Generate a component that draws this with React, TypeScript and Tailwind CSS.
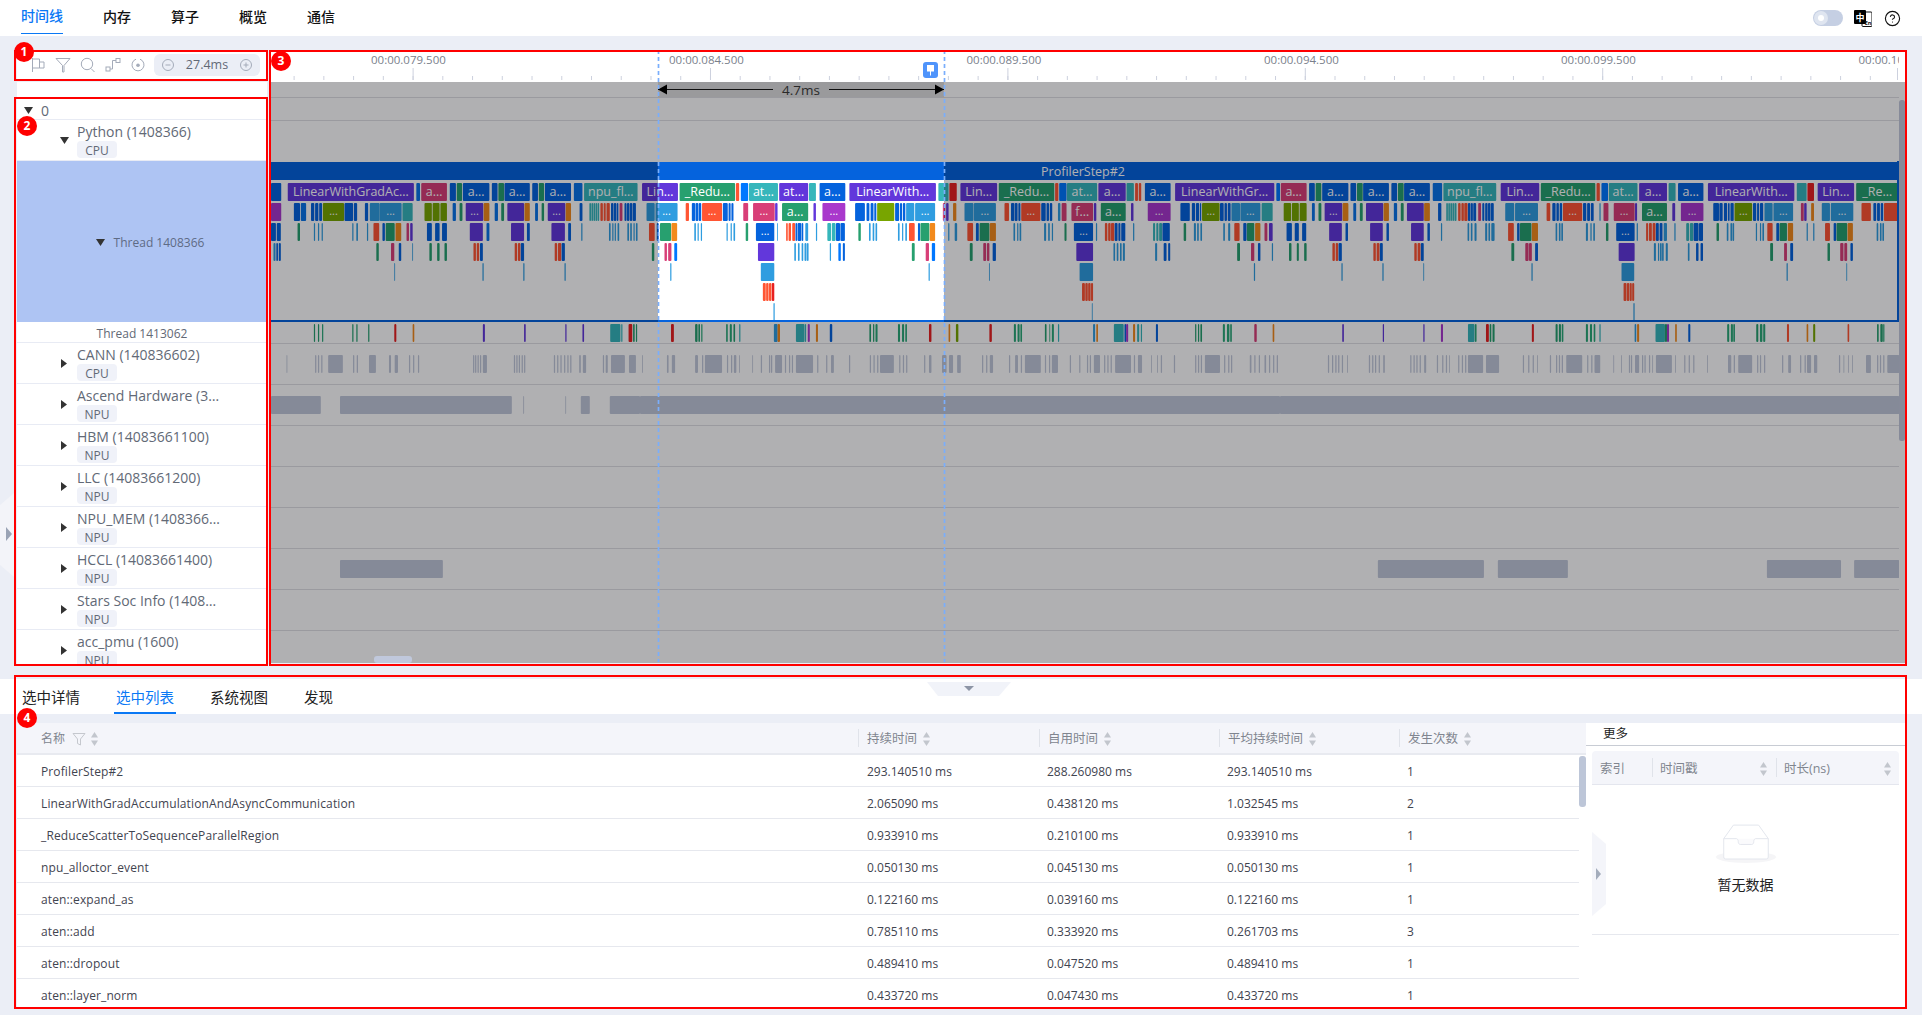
import React from "react";
import { CircleHelp } from "lucide-react";

type Seg = [number, number, string, string?];

const C: Record<string, string> = {
  p: "#6237db", b: "#0563dd", i: "#0a74e8", v: "#0077ff", t: "#36b6bb", k: "#d83f78", g: "#27a06f",
  l: "#2f9de0", o: "#78a500", r: "#ff5533", m: "#a938cc", d: "#e82020", y: "#f28a1c", n: "#2ba878",
};

const R1: [Seg[], Seg[], Seg[]] = [
  [[664,689,"b"],[705,1014,"p","LinearWithGradAc…"],[1020,1029,"i"],[1032,1095,"k","a…"],[1102,1117,"b"],[1119,1132,"g"],[1134,1199,"b","a…"],[1205,1219,"b"],[1221,1235,"g"],[1236,1298,"b","a…"],[1304,1318,"b"],[1320,1333,"g"],[1335,1399,"b","a…"],[1406,1427,"i"],[1431,1562,"t","npu_fl…"]],
  [[5,93,"p","Lin…"],[97,233,"g","_Redu…"],[235,243,"r"],[247,265,"v"],[267,338,"t","at…"],[341,412,"p","at…"],[414,431,"t"],[440,503,"b","a…"],[513,725,"p","LinearWith…"],[731,756,"t"],[758,776,"d"],[785,875,"p","Lin…"],[879,1015,"g","_Redu…"],[1017,1025,"r"],[1027,1045,"v"],[1046,1120,"t","at…"],[1123,1190,"p","a…"],[1192,1210,"t"],[1213,1220,"r"],[1222,1228,"r"],[1237,1300,"b","a…"],[1311,1554,"p","LinearWithGr…"],[1559,1568,"v"]],
  [[2,65,"k","a…"],[71,85,"b"],[87,101,"g"],[103,167,"b","a…"],[172,186,"b"],[188,202,"g"],[203,266,"b","a…"],[272,286,"b"],[288,302,"g"],[303,366,"b","a…"],[373,396,"i"],[399,528,"t","npu_fl…"],[539,633,"p","Lin…"],[637,770,"g","_Redu…"],[773,781,"r"],[785,801,"v"],[803,873,"t","at…"],[877,945,"p","a…"],[949,966,"t"],[972,1034,"b","a…"],[1045,1256,"p","LinearWith…"],[1262,1286,"t"],[1288,1304,"d"],[1313,1402,"p","Lin…"],[1407,1510,"g","_Re…"]],
];

const R2: [Seg[], Seg[], Seg[]] = [
  [[664,689,"m"],[720,735,"b"],[737,750,"i"],[762,770,"b"],[772,780,"b"],[782,789,"b"],[791,843,"o","..."],[844,865,"b"],[867,875,"b"],[894,902,"b"],[906,930,"l"],[930,984,"l","..."],[986,1011,"t"],[1040,1058,"o"],[1060,1077,"o"],[1079,1095,"o"],[1109,1117,"i"],[1126,1133,"g"],[1141,1184,"p","..."],[1185,1199,"y"],[1212,1220,"i"],[1228,1235,"g"],[1243,1284,"p"],[1285,1298,"y"],[1311,1318,"i"],[1327,1333,"g"],[1342,1385,"p","..."],[1386,1399,"y"],[1420,1427,"b"],[1444,1448,"t"],[1449,1453,"t"],[1454,1458,"t"],[1459,1463,"t"],[1464,1468,"t"],[1471,1477,"r"],[1479,1484,"r"],[1486,1494,"r"],[1497,1503,"b"],[1504,1510,"b"],[1511,1515,"b"],[1518,1525,"k"],[1530,1535,"b"],[1536,1542,"b"],[1543,1549,"b"],[1550,1558,"b"]],
  [[16,36,"l"],[38,92,"l","..."],[112,120,"r"],[127,135,"b"],[136,143,"b"],[144,150,"b"],[152,201,"r","..."],[203,215,"b"],[217,222,"b"],[224,229,"b"],[253,265,"k"],[277,330,"k","..."],[331,337,"p"],[348,412,"g","a…"],[425,431,"p"],[447,503,"m","..."],[527,551,"b"],[555,562,"b"],[565,572,"b"],[574,579,"b"],[581,623,"o"],[625,635,"b"],[637,642,"b"],[644,650,"b"],[652,672,"l"],[674,723,"l","..."],[742,748,"k"],[750,756,"p"],[767,775,"y"],[795,817,"l"],[818,872,"l","..."],[893,904,"r"],[909,917,"b"],[918,925,"b"],[927,932,"b"],[934,981,"r","..."],[983,994,"b"],[996,1002,"b"],[1004,1010,"b"],[1024,1030,"l"],[1033,1045,"k"],[1057,1110,"k","f…"],[1112,1118,"p"],[1129,1190,"g","a…"],[1203,1209,"p"],[1244,1300,"m","..."],[1324,1347,"b"],[1352,1360,"b"],[1362,1370,"b"],[1372,1375,"b"],[1377,1420,"o","..."],[1421,1430,"b"],[1432,1438,"b"],[1440,1447,"b"],[1449,1470,"l"],[1471,1520,"l","..."],[1523,1550,"t"]],
  [[9,27,"o"],[29,46,"o"],[48,65,"o"],[78,85,"i"],[94,101,"g"],[109,152,"p","..."],[153,167,"y"],[179,186,"i"],[195,202,"g"],[210,252,"p"],[253,266,"y"],[278,286,"i"],[295,302,"g"],[310,351,"p"],[352,366,"y"],[386,394,"b"],[406,410,"t"],[411,415,"t"],[416,420,"t"],[421,425,"t"],[426,431,"t"],[435,441,"r"],[443,449,"r"],[450,458,"r"],[459,465,"b"],[466,471,"b"],[472,479,"b"],[484,491,"k"],[494,499,"b"],[501,507,"b"],[508,514,"b"],[515,522,"b"],[550,572,"l"],[574,630,"l","..."],[651,660,"r"],[665,673,"b"],[675,681,"b"],[683,689,"b"],[691,738,"r","..."],[740,748,"b"],[750,757,"b"],[759,766,"b"],[780,783,"l"],[790,802,"k"],[815,866,"k","..."],[867,872,"p"],[884,945,"g","a…"],[958,965,"p"],[979,1034,"m","..."],[1058,1072,"b"],[1073,1081,"b"],[1084,1092,"b"],[1094,1098,"b"],[1100,1108,"b"],[1110,1153,"o","..."],[1155,1163,"b"],[1165,1170,"b"],[1172,1180,"b"],[1183,1203,"l"],[1205,1253,"l","..."],[1272,1279,"k"],[1280,1286,"p"],[1297,1304,"y"],[1323,1343,"l"],[1345,1400,"l","..."],[1420,1443,"r"],[1449,1456,"b"],[1458,1465,"b"],[1467,1473,"b"],[1475,1510,"r"]],
];

const R3: [Seg[], Seg[], Seg[]] = [
  [[664,676,"b"],[678,688,"b"],[729,735,"g"],[769,772,"l"],[779,782,"l"],[788,791,"l"],[863,866,"l"],[873,877,"l"],[899,902,"l"],[915,929,"r"],[937,943,"b"],[945,967,"g"],[969,983,"y"],[996,1002,"k"],[1005,1011,"p"],[1046,1058,"b"],[1066,1077,"b"],[1083,1095,"b"],[1151,1183,"p"],[1192,1199,"i"],[1252,1284,"p"],[1291,1298,"b"],[1351,1384,"p"],[1392,1399,"b"],[1424,1427,"l"],[1492,1496,"l"],[1500,1503,"l"],[1506,1509,"l"],[1513,1517,"l"],[1537,1541,"l"],[1544,1548,"l"],[1552,1555,"l"],[1558,1562,"l"]],
  [[22,36,"r"],[41,46,"b"],[49,76,"g"],[77,91,"y"],[133,137,"l"],[141,144,"l"],[149,152,"l"],[212,215,"l"],[222,225,"l"],[229,233,"l"],[259,265,"g"],[284,329,"b","..."],[336,338,"l"],[358,362,"r"],[364,370,"r"],[373,380,"r"],[381,385,"b"],[386,395,"b"],[396,400,"b"],[405,412,"l"],[431,434,"l"],[459,468,"t"],[470,479,"t"],[480,490,"b"],[491,502,"b"],[535,541,"g"],[561,565,"l"],[570,574,"l"],[577,581,"l"],[632,636,"l"],[642,645,"l"],[650,654,"l"],[659,673,"r"],[681,686,"b"],[687,709,"g"],[710,723,"y"],[755,758,"l"],[771,777,"l"],[802,816,"r"],[823,830,"b"],[832,856,"g"],[857,872,"y"],[915,919,"l"],[924,927,"l"],[930,934,"l"],[990,995,"l"],[1000,1004,"l"],[1009,1012,"l"],[1040,1045,"g"],[1063,1110,"b","..."],[1117,1120,"l"],[1139,1145,"r"],[1147,1153,"r"],[1154,1162,"r"],[1163,1170,"b"],[1172,1177,"b"],[1179,1189,"b"],[1208,1211,"l"],[1257,1262,"t"],[1265,1270,"t"],[1272,1279,"t"],[1280,1298,"b"],[1332,1338,"g"],[1357,1362,"l"],[1365,1369,"l"],[1373,1377,"l"],[1429,1433,"l"],[1441,1446,"l"],[1456,1469,"r"],[1478,1486,"b"],[1487,1505,"g"],[1507,1520,"y"],[1530,1537,"k"],[1541,1550,"p"]],
  [[16,29,"b"],[36,46,"b"],[54,64,"b"],[120,151,"p"],[160,166,"b"],[220,251,"p"],[260,266,"b"],[320,351,"p"],[360,366,"b"],[393,396,"l"],[458,462,"l"],[466,470,"l"],[475,480,"l"],[501,506,"l"],[509,513,"l"],[516,524,"l"],[557,571,"r"],[579,585,"b"],[586,614,"g"],[615,630,"y"],[673,677,"l"],[681,685,"l"],[687,691,"l"],[747,752,"l"],[758,761,"l"],[765,769,"l"],[796,802,"g"],[821,866,"b","..."],[871,874,"l"],[894,899,"r"],[901,908,"r"],[910,917,"r"],[918,925,"b"],[927,934,"b"],[937,945,"l"],[963,966,"l"],[992,999,"t"],[1001,1009,"t"],[1010,1022,"b"],[1023,1033,"b"],[1066,1072,"g"],[1091,1095,"l"],[1100,1104,"l"],[1105,1109,"l"],[1162,1165,"l"],[1172,1175,"l"],[1178,1182,"l"],[1190,1203,"r"],[1212,1219,"b"],[1220,1238,"g"],[1240,1253,"y"],[1286,1289,"l"],[1302,1305,"l"],[1331,1343,"r"],[1352,1358,"b"],[1359,1385,"g"],[1386,1399,"y"],[1457,1461,"l"],[1465,1469,"l"],[1471,1475,"l"]],
];

const R4: [Seg[], Seg[], Seg[]] = [
  [[670,675,"l"],[677,681,"b"],[683,688,"b"],[922,928,"g"],[958,966,"k"],[977,983,"b"],[1010,1012,"l"],[1052,1058,"g"],[1071,1077,"g"],[1089,1095,"g"],[1160,1166,"r"],[1168,1174,"r"],[1176,1183,"b"],[1261,1267,"r"],[1269,1275,"r"],[1276,1284,"b"],[1359,1365,"r"],[1367,1375,"r"],[1376,1384,"b"]],
  [[29,35,"g"],[60,66,"k"],[69,77,"k"],[84,91,"v"],[289,329,"p"],[378,382,"l"],[387,391,"l"],[396,400,"l"],[403,408,"l"],[409,413,"l"],[465,468,"l"],[486,492,"v"],[497,502,"b"],[666,673,"g"],[700,708,"k"],[715,723,"v"],[808,815,"g"],[841,848,"k"],[850,856,"k"],[864,872,"b"],[1069,1110,"p"],[1160,1164,"l"],[1168,1172,"l"],[1176,1180,"l"],[1183,1188,"l"],[1262,1267,"l"],[1283,1290,"b"],[1294,1299,"b"],[1463,1470,"g"],[1497,1505,"k"],[1514,1520,"b"],[1548,1551,"l"]],
  [[22,28,"g"],[41,46,"g"],[59,65,"g"],[128,134,"r"],[136,142,"r"],[143,151,"b"],[228,234,"r"],[236,243,"r"],[244,251,"b"],[328,334,"r"],[336,343,"r"],[344,351,"b"],[565,572,"g"],[599,607,"k"],[608,615,"k"],[623,630,"b"],[827,866,"p"],[913,918,"l"],[923,926,"l"],[928,932,"l"],[933,937,"l"],[942,947,"l"],[996,1000,"l"],[1016,1022,"b"],[1027,1033,"b"],[1197,1204,"g"],[1231,1238,"k"],[1246,1253,"b"],[1337,1343,"g"],[1368,1376,"k"],[1378,1385,"k"],[1393,1399,"b"]],
];

const R5: [Seg[], Seg[], Seg[]] = [
  [[966,968,"l"],[1182,1185,"l"],[1282,1285,"l"],[1383,1386,"l"]],
  [[74,77,"l"],[296,329,"l"],[707,710,"l"],[855,857,"l"],[1077,1110,"l"],[1504,1507,"l"]],
  [[150,153,"l"],[250,253,"l"],[350,352,"l"],[614,617,"l"],[834,865,"l"],[1237,1240,"l"],[1383,1385,"l"]],
];
const R6: [Seg[], Seg[], Seg[]] = [[], [[301,308,"r"],[309,315,"r"],[316,322,"r"],[323,329,"d"],[1083,1090,"r"],[1091,1097,"r"],[1098,1104,"r"],[1105,1110,"r"]], [[839,846,"r"],[847,853,"r"],[854,859,"r"],[860,865,"r"]]];
const R7: [Seg[], Seg[], Seg[]] = [[], [[327,330,"l"],[1107,1109,"l"]], [[863,866,"l"]]];

const T2: [Seg[], Seg[], Seg[]] = [
  [[769,772,"g"],[779,782,"g"],[789,792,"n"],[863,866,"g"],[873,876,"g"],[902,905,"g"],[966,971,"d"],[1011,1015,"y"],[1183,1188,"p"],[1284,1288,"p"],[1385,1388,"p"],[1427,1431,"p"],[1495,1520,"t"],[1522,1525,"t"],[1540,1549,"d"],[1551,1555,"g"],[1558,1561,"g"]],
  [[76,83,"d"],[135,141,"g"],[143,147,"g"],[150,153,"n"],[211,215,"n"],[220,225,"n"],[229,233,"g"],[243,246,"t"],[328,337,"l"],[337,343,"y"],[382,403,"t"],[404,407,"t"],[411,416,"m"],[431,436,"y"],[465,471,"b"],[562,566,"g"],[571,574,"g"],[577,582,"n"],[632,637,"n"],[642,647,"n"],[650,654,"n"],[708,714,"d"],[756,760,"y"],[774,780,"o"],[856,862,"d"],[916,921,"n"],[925,930,"n"],[932,936,"n"],[992,996,"g"],[1003,1005,"g"],[1009,1014,"n"],[1024,1027,"t"],[1110,1115,"l"],[1118,1122,"y"],[1161,1185,"t"],[1187,1191,"b"],[1191,1196,"m"],[1208,1213,"y"],[1218,1223,"t"],[1227,1230,"t"],[1264,1269,"b"],[1360,1363,"g"],[1367,1370,"g"],[1373,1377,"g"],[1428,1433,"n"],[1438,1444,"n"],[1446,1450,"n"],[1505,1511,"k"],[1550,1554,"y"]],
  [[152,156,"p"],[251,254,"p"],[350,353,"p"],[393,398,"m"],[459,475,"t"],[476,480,"n"],[503,510,"d"],[512,516,"g"],[519,524,"g"],[615,620,"d"],[673,678,"g"],[681,686,"g"],[688,692,"n"],[747,752,"n"],[757,762,"n"],[766,770,"n"],[780,783,"t"],[866,870,"l"],[872,877,"y"],[917,940,"t"],[940,945,"g"],[945,950,"m"],[965,969,"y"],[997,1002,"b"],[1092,1097,"n"],[1101,1106,"n"],[1107,1111,"n"],[1163,1168,"g"],[1172,1178,"n"],[1180,1185,"n"],[1238,1243,"r"],[1286,1290,"y"],[1302,1307,"o"],[1386,1390,"r"],[1458,1462,"g"],[1466,1472,"g"],[1473,1476,"n"]],
];

const CANN: [number[][], number[][], number[][]] = [
  [[702,704],[772,775],[779,782],[787,790],[804,840],[865,868],[874,877],[904,921],[953,958],[967,975],[1002,1005],[1012,1015],[1024,1027],[1159,1162],[1164,1167],[1170,1173],[1176,1179],[1183,1193],[1259,1262],[1265,1268],[1271,1274],[1278,1281],[1284,1287],[1357,1360],[1365,1368],[1373,1376],[1382,1385],[1390,1393],[1397,1400],[1419,1423],[1428,1436],[1477,1480],[1484,1489],[1497,1531],[1541,1558]],
  [[5,7],[66,70],[78,86],[135,142],[152,155],[159,201],[213,216],[223,226],[230,236],[243,245],[275,277],[296,299],[316,319],[321,324],[331,348],[355,358],[365,368],[372,375],[382,424],[434,437],[456,459],[468,475],[512,515],[563,566],[572,575],[581,584],[588,622],[635,638],[644,647],[652,655],[696,699],[708,714],[740,751],[757,767],[777,786],[838,841],[848,851],[857,865],[904,907],[919,926],[933,936],[943,982],[992,995],[1002,1005],[1009,1024],[1053,1056],[1076,1079],[1095,1098],[1102,1105],[1112,1127],[1137,1140],[1145,1148],[1153,1156],[1164,1203],[1210,1213],[1220,1230],[1252,1254],[1267,1269],[1276,1279],[1308,1311],[1360,1363],[1367,1370],[1374,1377],[1384,1421],[1431,1434],[1441,1444],[1448,1451],[1494,1498],[1505,1508],[1516,1519],[1530,1534],[1541,1544],[1551,1554],[1560,1563]],
  [[117,120],[127,130],[135,138],[142,145],[151,154],[164,166],[217,220],[225,228],[232,235],[241,244],[252,256],[318,321],[326,329],[333,336],[341,344],[352,357],[383,386],[396,399],[405,408],[413,415],[435,438],[444,447],[452,455],[459,496],[503,535],[593,596],[606,609],[617,620],[628,630],[659,662],[674,677],[681,684],[688,691],[699,738],[750,753],[760,763],[768,782],[814,816],[833,835],[852,855],[857,860],[867,877],[884,887],[890,893],[901,904],[909,911],[918,957],[965,967],[987,990],[998,1001],[1009,1012],[1043,1045],[1094,1102],[1108,1111],[1119,1153],[1165,1168],[1172,1175],[1182,1185],[1226,1229],[1241,1248],[1270,1273],[1281,1284],[1287,1297],[1304,1312],[1365,1368],[1376,1378],[1387,1389],[1397,1399],[1431,1443],[1458,1461],[1465,1468],[1473,1476],[1483,1512]],
];
const ASCEND: [number[][], number[][], number[][]] = [
  [[664,786],[833,1254],[1282,1284],[1385,1387],[1423,1445],[1494,1568]],
  [[0,1568]],
  [[0,1512]],
];
const HCCL: [number[][], number[][], number[][]] = [[[833,1085]], [], [[239,498],[532,703],[1189,1370],[1402,1512]]];

const OFF = [0, 640, 1280];
const SC = [2.45, 2.45, 2.442];

function Blocks({ data, y, h = 18 }: { data: [Seg[], Seg[], Seg[]]; y: number; h?: number }) {
  return (
    <g>
      {data.map((segs, pi) =>
        segs.map((s, i) => {
          const x0 = OFF[pi] + s[0] / SC[pi];
          const x1 = OFF[pi] + s[1] / SC[pi];
          const w = x1 - x0;
          const dots = s[3] === "...";
          return (
            <g key={pi + "-" + i}>
              <rect x={x0} y={y} width={w} height={h} rx={1} fill={C[s[2]]} />
              {s[3] ? (
                <text x={(x0 + x1) / 2} y={dots ? y + 12 : y + 13} textAnchor="middle" fontSize={dots ? 11 : 12.5} fill="#ffffff">
                  {s[3]}
                </text>
              ) : null}
            </g>
          );
        })
      )}
    </g>
  );
}

function Track({ data, y }: { data: [number[][], number[][], number[][]]; y: number }) {
  return (
    <g>
      {data.map((segs, pi) =>
        segs.map((s, i) => (
          <rect key={pi + "-" + i} x={OFF[pi] + s[0] / SC[pi]} y={y} width={(s[1] - s[0]) / SC[pi]} height={18} rx={1} fill="#c1c8da" />
        ))
      )}
    </g>
  );
}

const majors = [412.6, 710, 1007.4, 1304.8, 1602.2, 1897];
const labels: [number, string][] = [
  [371, "00:00.079.500"],
  [669, "00:00.084.500"],
  [966.5, "00:00.089.500"],
  [1264, "00:00.094.500"],
  [1561, "00:00.099.500"],
  [1858.5, "00:00.104.500"],
];

function Timeline() {
  const minors: number[] = [];
  for (let x = 293.6; x < 1900; x += 29.74) minors.push(x);
  return (
    <svg viewBox="270 50 1636 615" className="block w-[1636px] h-[615px] shrink-0">
      <defs>
        <clipPath id="canvasClip">
          <rect x="270" y="50" width="1629" height="615" />
        </clipPath>
      </defs>
      <rect x="270" y="50" width="1636" height="32" fill="#ffffff" />
      <g clipPath="url(#canvasClip)">
        {minors.map((x) => (
          <rect key={x} x={x} y={76} width={1} height={4} fill="#cdd1de" />
        ))}
        {majors.map((x) => (
          <rect key={x} x={x} y={68} width={1} height={12} fill="#cdd1de" />
        ))}
        {labels.map(([x, t]) => (
          <text key={t} x={x} y={64} fontSize={11.5} fill="#7a808c">
            {t}
          </text>
        ))}
      </g>
      <rect x="270" y="82" width="1636" height="581" fill="#ffffff" />
      {[97, 120, 343, 384, 425, 466, 507, 548, 589, 630].map((y) => (
        <rect key={y} x={270} y={y} width={1629} height={1} fill="#dfe0e4" />
      ))}
      <g clipPath="url(#canvasClip)">
        <rect x="270" y="162" width="1629" height="18" fill="#0563dd" />
        <text x="1083" y="176" textAnchor="middle" fontSize={12.5} fill="#ffffff">
          ProfilerStep#2
        </text>
        <Blocks data={R1} y={183} />
        <Blocks data={R2} y={203} />
        <Blocks data={R3} y={223} />
        <Blocks data={R4} y={243} />
        <Blocks data={R5} y={263} />
        <Blocks data={R6} y={283} />
        <Blocks data={R7} y={303} />
        <rect x="270" y="320" width="1629" height="2" fill="#0563dd" />
        <rect x="1897" y="161" width="2" height="161" fill="#0563dd" />
        <Blocks data={T2} y={324} />
        <Track data={CANN} y={355} />
        <Track data={ASCEND} y={396} />
        <Track data={HCCL} y={560} />
      </g>
      <g fill="#000006" fillOpacity={0.31}>
        <rect x="270" y="82" width="1636" height="80" />
        <rect x="270" y="162" width="388" height="160" />
        <rect x="944" y="162" width="962" height="160" />
        <rect x="270" y="322" width="1636" height="341" />
      </g>
      <rect x="658" y="82" width="286" height="15" fill="#000000" fillOpacity={0.12} />
      <rect x="658" y="89" width="115" height="1" fill="#111111" />
      <rect x="829" y="89" width="115" height="1" fill="#111111" />
      <polygon points="658,89.5 667,84.5 667,94.5" fill="#000000" />
      <polygon points="944,89.5 935,84.5 935,94.5" fill="#000000" />
      <text x="801" y="94.5" textAnchor="middle" fontSize={13.5} fill="#2a2a2a">
        4.7ms
      </text>
      <line x1="658.5" y1="50" x2="658.5" y2="662" stroke="#7aaefc" strokeWidth={1.7} strokeDasharray="4 3" />
      <line x1="944.5" y1="50" x2="944.5" y2="662" stroke="#7aaefc" strokeWidth={1.7} strokeDasharray="4 3" />
      <rect x="923" y="62" width="15" height="16" rx="3" fill="#4f94fb" />
      <path d="M927 65h7v6.5h-3v4h-1v-4h-3z" fill="#ffffff" />
      <rect x="1899" y="100" width="6" height="341" rx="2.5" fill="#868a99" />
      <rect x="374" y="656" width="38" height="7" rx="3" fill="#c0c8dc" />
    </svg>
  );
}

function ArrowDown() {
  return (
    <svg width="9" height="7" viewBox="0 0 9 7" className="shrink-0">
      <polygon points="0,0 9,0 4.5,7" fill="#333333" />
    </svg>
  );
}
function ArrowRight() {
  return (
    <svg width="6" height="9" viewBox="0 0 6 9" className="shrink-0">
      <polygon points="0,0 6,4.5 0,9" fill="#333333" />
    </svg>
  );
}

function ProcessRow({ name, tag, open }: { name: string; tag: string; open?: boolean }) {
  return (
    <div className="h-[41px] shrink-0 border-b border-[#e8ebf4] flex items-center pl-[43px] bg-white">
      <div className="w-[17px] flex">{open ? <ArrowDown /> : <div className="pl-[1px]"><ArrowRight /></div>}</div>
      <div className="flex flex-col items-start">
        <div className="text-[14px] leading-[18px] h-[18px] text-[#626976] whitespace-nowrap">{name}</div>
        <div className="h-[17px] w-[40px] rounded-[4px] bg-[#f0f2f9] text-[12px] leading-[19px] text-center text-[#626976]">{tag}</div>
      </div>
    </div>
  );
}

const ICON = "w-4 h-4 shrink-0 fill-none stroke-[#a4abb9]";

function Toolbar() {
  return (
    <div className="h-[30px] bg-white flex items-center pl-[13px] gap-[9px]">
      <svg viewBox="0 0 16 16" className={ICON} strokeWidth={1}>
        <path d="M2.5 1v14M2.5 2h7v9h-7M9.5 5h4.5v6h-4.5" />
      </svg>
      <svg viewBox="0 0 16 16" className={ICON} strokeWidth={1}>
        <path d="M1 1.5h14L9 8.5V15H7.5V8.5z" />
      </svg>
      <svg viewBox="0 0 16 16" className={ICON} strokeWidth={1}>
        <circle cx="7" cy="7" r="5.7" />
        <path d="M11 11.5l3.5 3.5" />
      </svg>
      <svg viewBox="0 0 16 16" className={ICON} strokeWidth={1}>
        <rect x="1" y="10" width="4" height="4" />
        <rect x="11" y="1.5" width="4" height="4" />
        <path d="M5 12h2.5V3.5H11" />
      </svg>
      <svg viewBox="0 0 16 16" className={ICON} strokeWidth={1}>
        <path d="M10 2.2A6 6 0 1 1 6 2.2" />
        <circle cx="8" cy="8.2" r="1.8" fill="#a4abb9" stroke="none" />
      </svg>
      <div className="ml-[-1px] w-[106px] h-[22px] rounded-md bg-[#ebeef6] flex items-center justify-between px-[8px]">
        <svg viewBox="0 0 12 12" className="w-3 h-3 fill-none stroke-[#a4abb9]">
          <circle cx="6" cy="6" r="5.5" />
          <path d="M3.5 6h5" />
        </svg>
        <span className="text-[12.5px] text-[#626976]">27.4ms</span>
        <svg viewBox="0 0 12 12" className="w-3 h-3 fill-none stroke-[#a4abb9]">
          <circle cx="6" cy="6" r="5.5" />
          <path d="M3.5 6h5M6 3.5v5" />
        </svg>
      </div>
    </div>
  );
}

function LeftColumn() {
  const rows: [string, string][] = [
    ["CANN (140836602)", "CPU"],
    ["Ascend Hardware (3…", "NPU"],
    ["HBM (14083661100)", "NPU"],
    ["LLC (14083661200)", "NPU"],
    ["NPU_MEM (1408366…", "NPU"],
    ["HCCL (14083661400)", "NPU"],
    ["Stars Soc Info (1408…", "NPU"],
    ["acc_pmu (1600)", "NPU"],
  ];
  return (
    <div className="w-[250px] h-[615px] shrink-0 flex flex-col overflow-hidden">
      <Toolbar />
      <div className="h-[15px] mt-[2px] bg-white shrink-0" />
      <div className="flex-1 flex flex-col overflow-hidden bg-white">
        <div className="h-[23px] shrink-0 border-b border-[#e8ebf4] flex items-center pl-[7px] pt-[4px] gap-[8px]">
          <ArrowDown />
          <span className="text-[14px] text-[#626976]">0</span>
        </div>
        <ProcessRow name="Python (1408366)" tag="CPU" open />
        <div className="h-[161px] shrink-0 bg-[#aec4f3] flex items-center justify-center gap-[9px] pl-[16px] pt-[2px]">
          <ArrowDown />
          <span className="text-[12px] text-[#5e6b85]">Thread 1408366</span>
        </div>
        <div className="h-[21px] shrink-0 border-b border-[#e8ebf4] flex items-center justify-center pt-[3px] text-[12px] text-[#626976]">
          Thread 1413062
        </div>
        {rows.map(([n, t]) => (
          <ProcessRow key={n} name={n} tag={t} />
        ))}
      </div>
    </div>
  );
}

function Sort({ className = "" }: { className?: string }) {
  return (
    <svg width="7" height="14" viewBox="0 0 7 14" className={"shrink-0 " + className}>
      <polygon points="3.5,0 7,5.5 0,5.5" fill="#c2c6cd" />
      <polygon points="3.5,14 7,8.5 0,8.5" fill="#c2c6cd" />
    </svg>
  );
}

const tableRows: string[][] = [
  ["ProfilerStep#2", "293.140510 ms", "288.260980 ms", "293.140510 ms", "1"],
  ["LinearWithGradAccumulationAndAsyncCommunication", "2.065090 ms", "0.438120 ms", "1.032545 ms", "2"],
  ["_ReduceScatterToSequenceParallelRegion", "0.933910 ms", "0.210100 ms", "0.933910 ms", "1"],
  ["npu_alloctor_event", "0.050130 ms", "0.045130 ms", "0.050130 ms", "1"],
  ["aten::expand_as", "0.122160 ms", "0.039160 ms", "0.122160 ms", "1"],
  ["aten::add", "0.785110 ms", "0.333920 ms", "0.261703 ms", "3"],
  ["aten::dropout", "0.489410 ms", "0.047520 ms", "0.489410 ms", "1"],
  ["aten::layer_norm", "0.433720 ms", "0.047430 ms", "0.433720 ms", "1"],
];

function HeadCell({ label }: { label: string }) {
  return (
    <div className="relative flex items-center pl-[9px] pt-[2px] gap-[6px] text-[12.5px] text-[#80858f]">
      <span className="absolute left-0 top-[6px] bottom-[6px] w-px bg-[#e0e3ea]" />
      <span>{label}</span>
      <Sort />
    </div>
  );
}

function DataTable() {
  return (
    <div className="w-[1569px] h-[285px] shrink-0 bg-white overflow-hidden relative">
      <div className="h-[32px] bg-[#f4f5fa] border-b-2 border-[#e8eaf0] grid grid-cols-[841px_181px_180px_180px_187px]">
        <div className="flex items-center pl-[24px] pt-[2px] text-[12px] text-[#80858f]">
          <span>名称</span>
          <svg viewBox="0 0 14 14" className="w-[14px] h-[14px] ml-[7px] fill-none stroke-[#c5c8ce]">
            <path d="M1 1.5h12L8.5 7v6L5.5 11.5V7z" />
          </svg>
          <Sort className="ml-[5px]" />
        </div>
        <HeadCell label="持续时间" />
        <HeadCell label="自用时间" />
        <HeadCell label="平均持续时间" />
        <HeadCell label="发生次数" />
      </div>
      <div className="w-[1562px]">
        {tableRows.map((r) => (
          <div key={r[0]} className="h-[32px] pt-[2px] border-b border-[#e6e8ee] grid grid-cols-[841px_181px_180px_180px_180px] items-center text-[12px] text-[#3f4450]">
            <div className="pl-[24px] tracking-[0.12px]">{r[0]}</div>
            <div className="pl-[9px]">{r[1]}</div>
            <div className="pl-[8px]">{r[2]}</div>
            <div className="pl-[8px]">{r[3]}</div>
            <div className="pl-[8px]">{r[4]}</div>
          </div>
        ))}
      </div>
      <div className="absolute right-0 top-[33px] w-[7px] h-[51px] rounded-[3px] bg-[#bdc6d8]" />
    </div>
  );
}

function MorePanel() {
  return (
    <div className="w-[319px] h-[285px] bg-white shrink-0 flex flex-col relative">
      <div className="h-[23px] border-b border-[#c8ccd4] pl-[17px] flex items-center text-[12.5px] text-[#222]">更多</div>
      <div className="mx-[6px] mt-[5px] h-[34px] pt-[3px] bg-[#f4f5fa] border-b border-[#e4e6ee] rounded-t-sm grid grid-cols-[60px_124px_125px] text-[12.5px] text-[#80858f] items-center">
        <div className="pl-[8px]">索引</div>
        <div className="relative pl-[8px] pr-[9px] flex items-center justify-between h-full">
          <span className="absolute left-0 top-[4px] bottom-[7px] w-px bg-[#e0e3ea]" />
          <span>时间戳</span>
          <Sort />
        </div>
        <div className="relative pl-[8px] pr-[10px] flex items-center justify-between h-full">
          <span className="absolute left-0 top-[4px] bottom-[7px] w-px bg-[#e0e3ea]" />
          <span>时长(ns)</span>
          <Sort />
        </div>
      </div>
      <div className="mx-[6px] h-[150px] border-b border-[#e6e8ee] flex flex-col items-center pt-[38px]">
        <svg viewBox="0 0 64 42" className="w-[62px] h-[41px]">
          <ellipse cx="32" cy="35" rx="31" ry="6" fill="#f5f5f7" />
          <path d="M9 16L19 2h26l10 14v19a2 2 0 0 1-2 2H11a2 2 0 0 1-2-2z" fill="#ffffff" stroke="#e2e5ec" />
          <path d="M9 16h13c1 0 2 1 2 3s1 3 2 3h12c1 0 2-1 2-3s1-3 2-3h13" fill="#fafafc" stroke="#e2e5ec" />
        </svg>
        <div className="text-[14px] text-[#222] mt-[10px]">暂无数据</div>
      </div>
      <svg viewBox="0 0 14 84" className="absolute left-[6px] top-[109px] w-[14px] h-[84px]">
        <path d="M0 0L14 12V72L0 84z" fill="#f4f5fa" />
        <polygon points="4,36 9,42 4,48" fill="#a4adbc" />
      </svg>
    </div>
  );
}

function BottomPanel() {
  const tabs = ["选中详情", "选中列表", "系统视图", "发现"];
  return (
    <div className="flex flex-col shrink-0">
      <div className="h-[35px] bg-white relative flex items-start pl-[22px] gap-[36px]">
        {tabs.map((t, i) => (
          <div
            key={t}
            className={
              i === 1
                ? "h-[35px] pt-[10px] text-[14.5px] leading-[18px] text-[#0a78f5] border-b-2 border-[#0a78f5] px-[2px] mx-[-2px]"
                : "h-[35px] pt-[10px] text-[14.5px] leading-[18px] text-[#222]"
            }
          >
            {t}
          </div>
        ))}
        <svg viewBox="0 0 84 14" className="absolute left-[927px] top-[3px] w-[84px] h-[14px]">
          <path d="M0 0H84L72 14H11z" fill="#f1f3f9" />
          <polygon points="37,4 47,4 42,9" fill="#8d95a5" />
        </svg>
      </div>
      <div className="flex mt-[9px] ml-[17px]">
        <DataTable />
        <MorePanel />
      </div>
    </div>
  );
}

function Header() {
  const tabs = ["内存", "算子", "概览", "通信"];
  return (
    <div className="h-9 bg-white flex items-start pl-[21px] shrink-0">
      <div className="h-[34px] pb-[2px] border-b border-[#0a78f5] flex items-center text-[14px] font-medium text-[#0a78f5] mr-[40px]">时间线</div>
      <div className="flex gap-[40px] h-[34px] pb-[2px] items-center text-[14px] font-medium text-[#111]">
        {tabs.map((t) => (
          <div key={t}>{t}</div>
        ))}
      </div>
      <div className="ml-auto flex items-center h-[36px] pr-[21px]">
        <div className="w-[30px] h-[16px] rounded-full bg-[#c5cfe3] flex items-center pl-[1px]">
          <div className="w-[14px] h-[14px] rounded-full bg-[#dfe5f0] flex items-center justify-center">
            <div className="w-[6px] h-[6px] rounded-full bg-white" />
          </div>
        </div>
        <svg viewBox="0 0 18 17" className="w-[18px] h-[17px] ml-[11px]">
          <rect x="8" y="2" width="10" height="14.5" rx="1" fill="#ffffff" stroke="#111111" />
          <rect x="0" y="0" width="12" height="14" rx="1" fill="#000000" />
          <text x="6" y="10.5" textAnchor="middle" fontSize={9} fill="#ffffff" fontWeight={700}>中</text>
          <text x="14" y="14.5" textAnchor="middle" fontSize={5.5} fill="#111111" fontWeight={700}>En</text>
        </svg>
        <CircleHelp className="w-[17px] h-[17px] ml-[12px] text-[#111]" strokeWidth={1.6} />
      </div>
    </div>
  );
}

function Badge({ n, className }: { n: number; className: string }) {
  return (
    <div className={"absolute w-5 h-5 rounded-full bg-[#ff0000] text-white text-[12px] font-bold flex items-center justify-center " + className}>
      {n}
    </div>
  );
}

export default function App() {
  return (
    <div className="relative w-full h-[1017px] overflow-hidden bg-[#ebeef6] flex flex-col font-['Open_Sans','Noto_Sans_CJK_SC',sans-serif]">
      <Header />
      <div className="flex mt-[14px] ml-[17px] gap-[3px] shrink-0">
        <LeftColumn />
        <Timeline />
      </div>
      <div className="mt-[14px]">
        <BottomPanel />
      </div>
      <div className="absolute left-0 right-0 bottom-0 h-[2px] bg-white" />
      <svg viewBox="0 0 14 84" className="absolute left-0 top-[493px] w-[14px] h-[84px]">
        <path d="M0 12L14 0V84L0 72z" fill="#f3f4f9" />
        <polygon points="6,34 12,41 6,48" fill="#9aa3b5" />
      </svg>

      <div className="absolute left-[14px] top-[50px] w-[254px] h-[31px] border-2 border-[#ff0000]" />
      <div className="absolute left-[14px] top-[97px] w-[254px] h-[569px] border-2 border-[#ff0000]" />
      <div className="absolute left-[269px] top-[50px] w-[1638px] h-[616px] border-2 border-[#ff0000]" />
      <div className="absolute left-[14px] top-[675px] w-[1893px] h-[334px] border-2 border-[#ff0000]" />
      <Badge n={1} className="left-[14px] top-[42px]" />
      <Badge n={2} className="left-[17px] top-[116px]" />
      <Badge n={3} className="left-[271px] top-[51px]" />
      <Badge n={4} className="left-[17px] top-[708px]" />
    </div>
  );
}
